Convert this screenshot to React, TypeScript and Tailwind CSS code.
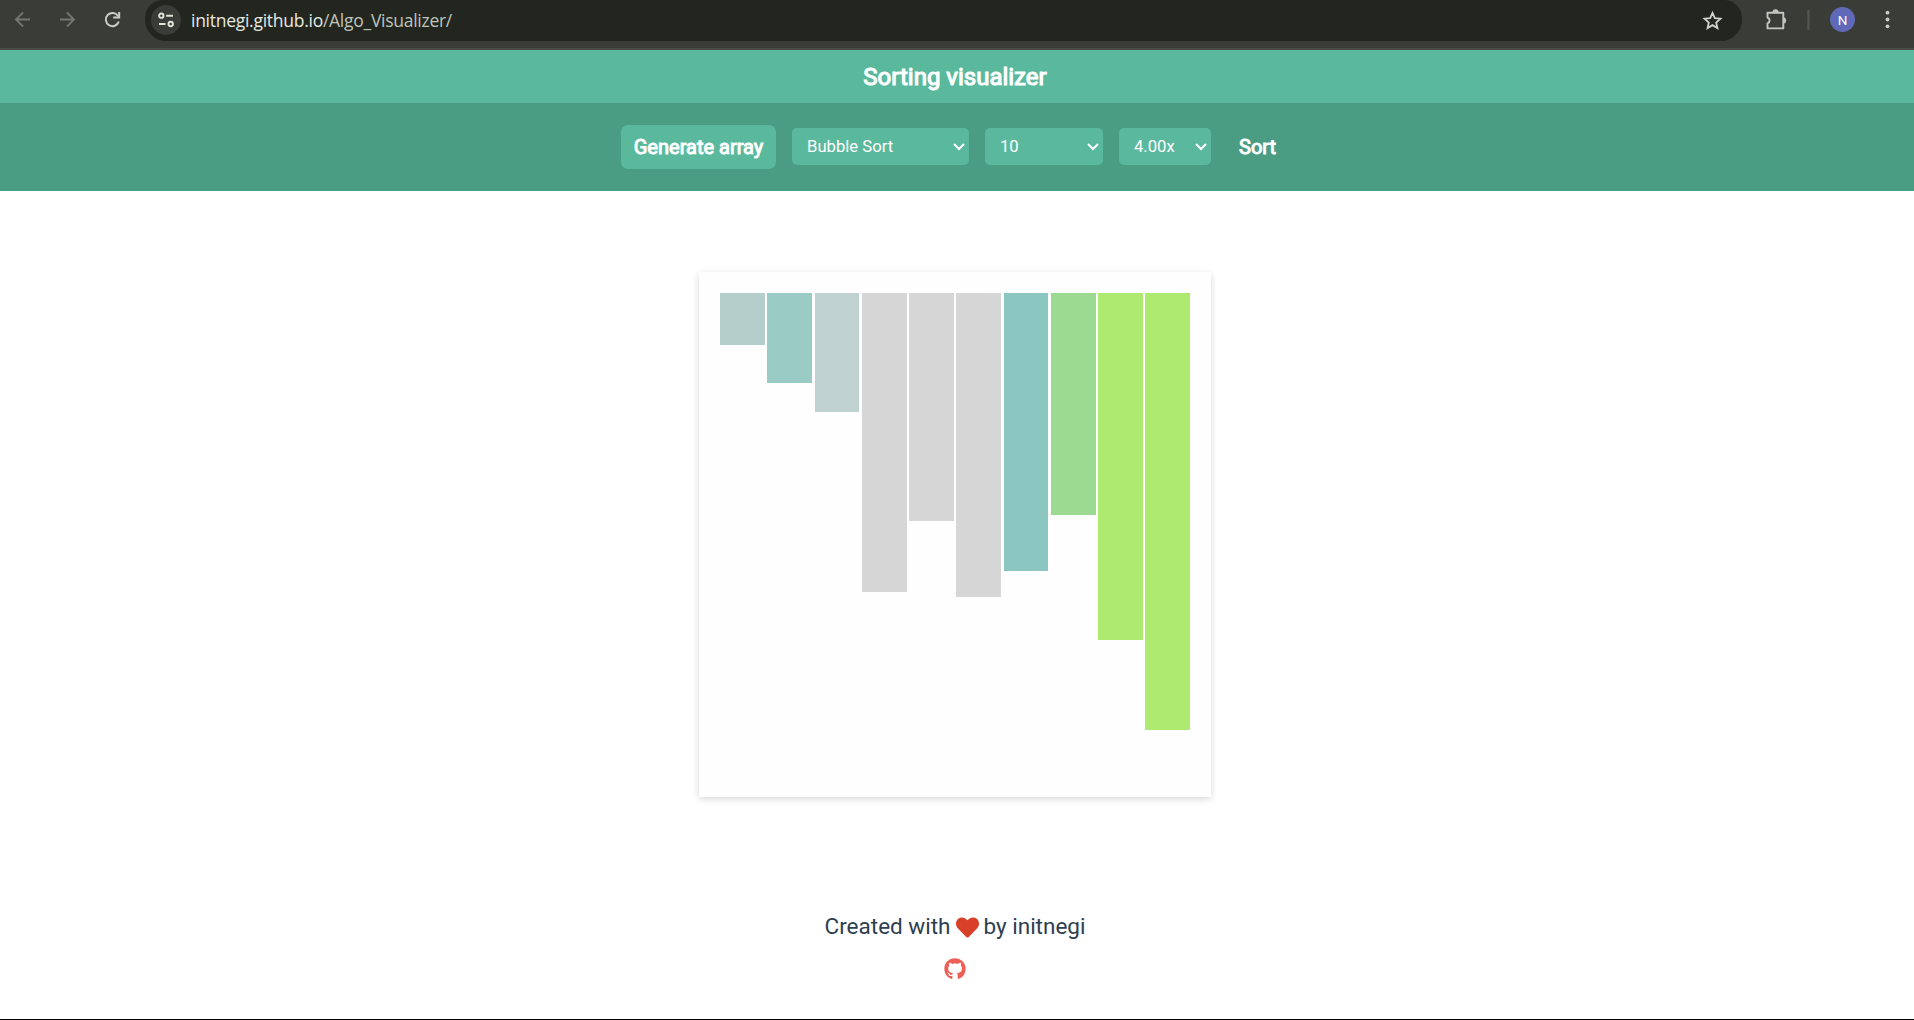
import { FaGithub, FaHeart } from "react-icons/fa";

const bars = [
  { value: 52, width: 45, gap: 2, color: "#b4cecb" },
  { value: 90, width: 45, gap: 3, color: "#9bcbc5" },
  { value: 119, width: 44, gap: 3, color: "#c0d2cf" },
  { value: 299, width: 45, gap: 2, color: "#d6d6d6" },
  { value: 228, width: 45, gap: 2, color: "#d6d6d6" },
  { value: 304, width: 45, gap: 3, color: "#d6d6d6" },
  { value: 278, width: 44, gap: 3, color: "#8bc7c0" },
  { value: 222, width: 45, gap: 2, color: "#9cda92" },
  { value: 347, width: 45, gap: 2, color: "#aeea70" },
  { value: 437, width: 45, gap: 0, color: "#aeea70" },
];

function BrowserBar() {
  return (
    <div className="flex h-[50px] items-start border-b-2 border-[#4a4b49] bg-[#3a3d37]">
      <svg className="h-[40px] w-[145px] shrink-0" viewBox="0 0 145 40" fill="none" strokeWidth="1.8">
        <path d="M30 19.5H16.5M23 12.5l-7 7 7 7" stroke="#74776f" />
        <path d="M60 19.5h13.5M67 12.5l7 7-7 7" stroke="#74776f" />
        <path d="M118.2 16.2A6.6 6.6 0 1 0 118.8 21.500" stroke="#c9cdc3" strokeWidth="2" />
        <path d="M119.200 12v5.400h-6" stroke="#c9cdc3" strokeWidth="2" />
      </svg>
      <div className="flex h-[41px] w-[1597px] shrink-0 items-start rounded-b-[21px] rounded-t-[18px] bg-[#22261f] pl-[6px]">
        <div className="mt-[5px] flex size-[30px] items-center justify-center rounded-full bg-[#3a3d37]">
          <svg width="16" height="16" viewBox="0 0 16 16" fill="none" stroke="#dfe3d8" strokeWidth="1.9">
            <circle cx="3.300" cy="3.700" r="2.200" />
            <path d="M8.200 3.700H15M1 12H7.500" />
            <circle cx="12.700" cy="12" r="2.200" />
          </svg>
        </div>
        <div className="ml-[10px] mt-[8px] font-['Open_Sans','Noto_Sans',sans-serif] text-[17.5px] leading-6 tracking-[-0.27px] text-[#e5e8e0]">
          initnegi.github.io<span className="text-[#bfc3b9]">/Algo_Visualizer/</span>
        </div>
        <svg className="ml-auto mr-[19px] mt-[10px]" width="21" height="21" viewBox="0 0 20 20" fill="none" stroke="#cfd3c9" strokeWidth="1.7">
          <path d="M10 2.800l2.200 5 5.400.5-4.100 3.600 1.200 5.300L10 14.400l-4.700 2.800 1.200-5.300-4.100-3.600 5.400-.5z" />
        </svg>
      </div>
      <svg className="h-[40px] w-[172px] shrink-0" viewBox="1742 0 172 40">
        <path
          d="M1767.500 12.800h15.800v15.600h-15.800v-4.900a3.200 3.200 0 0 0 0-6z"
          fill="none"
          stroke="#c3c7bd"
          strokeWidth="1.900"
          strokeLinejoin="round"
        />
        <path d="M1772.500 12.300a3 3 0 0 1 6 0zM1783.800 17.300a3.200 3.200 0 0 1 0 6.200z" fill="#c3c7bd" />
        <rect x="1807.300" y="10" width="2.400" height="20" rx="1.200" fill="#52554e" />
        <circle cx="1842.500" cy="19.500" r="12.500" fill="#5f69b8" />
        <text x="1842.500" y="24.500" textAnchor="middle" fill="#fff" fontFamily="Roboto, sans-serif" fontSize="13.500">
          N
        </text>
        <g fill="#c9cdc3">
          <circle cx="1887.500" cy="12.700" r="1.900" />
          <circle cx="1887.500" cy="19.500" r="1.900" />
          <circle cx="1887.500" cy="26.300" r="1.900" />
        </g>
      </svg>
    </div>
  );
}

function Select({ label, className }: { label: string; className: string }) {
  return (
    <button
      className={`mb-px flex h-[37px] items-center justify-between rounded-[5px] bg-[#5ab99d] pl-[15px] pr-1 text-[16.67px] leading-5 ${className}`}
    >
      <span>{label}</span>
      <svg width="12" height="8" viewBox="0 0 12 8" fill="none" stroke="#fff" strokeWidth="2">
        <path d="M1 1l5 5 5-5" />
      </svg>
    </button>
  );
}

export default function App() {
  return (
    <div className="flex h-[1020px] w-[1914px] flex-col overflow-hidden border-b border-black bg-white font-['Roboto',sans-serif]">
      <BrowserBar />
      <header className="flex h-[53px] items-center justify-center bg-[#5ab99d] pr-1 text-[24px] text-white">
        <h1 className="[-webkit-text-stroke:1.1px_white]">Sorting visualizer</h1>
      </header>
      <nav className="flex h-[88px] items-center gap-4 bg-[#4a9d83] pl-[621px] text-white">
        <button className="h-[44px] w-[155px] rounded-[7px] bg-[#5ab99d] text-[20px] [-webkit-text-stroke:1px_white]">
          Generate array
        </button>
        <Select label="Bubble Sort" className="w-[177px]" />
        <Select label="10" className="w-[118px]" />
        <Select label="4.00x" className="w-[92px]" />
        <button className="px-3 text-[20px] [-webkit-text-stroke:1px_white]">Sort</button>
      </nav>
      <main className="flex flex-col items-center pr-1">
        <div className="mt-[81px] flex h-[525px] w-[512px] items-start bg-[#fefefe] pl-[21px] pt-[21px] shadow-[0_2px_7px_rgba(0,0,0,0.16)]">
          {bars.map((bar, i) => (
            <div
              key={i}
              className="shrink-0"
              style={{ height: bar.value, width: bar.width, marginRight: bar.gap, backgroundColor: bar.color }}
            />
          ))}
        </div>
        <footer className="mt-[114px] flex flex-col items-center text-[#2c3e50]">
          <p className="flex h-8 items-center text-[22.5px]">
            Created with
            <FaHeart className="mx-[5px] text-[#d84027]" size={23} />
            by initnegi
          </p>
          <FaGithub className="mt-[15px] text-[#ee6055]" size={22} />
        </footer>
      </main>
    </div>
  );
}
